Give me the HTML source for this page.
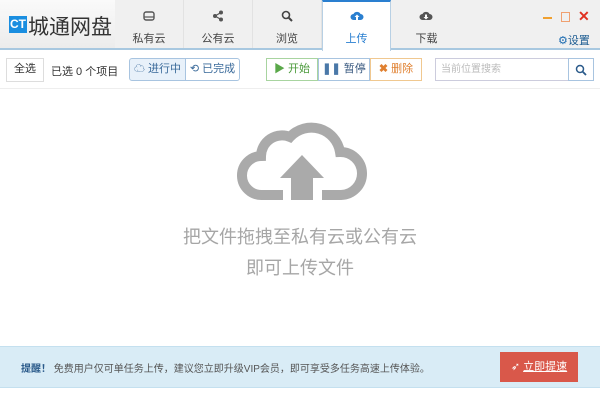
<!DOCTYPE html>
<html><head><meta charset="utf-8"><style>
*{margin:0;padding:0;box-sizing:border-box}
body{width:600px;height:402px;background:#fff;font-family:"Liberation Sans","Noto Sans CJK SC",sans-serif;position:relative;overflow:hidden;font-size:12px;color:#333}
.top{position:absolute;left:0;top:0;width:600px;height:50px;background:#f0f0f0;border-bottom:2px solid #a8c8e0}
.logo{position:absolute;left:0;top:0;width:115px;height:48px;background:linear-gradient(#fafafa,#ececec)}
.logo .ct{position:absolute;left:9px;top:16px;width:18px;height:17px;background:#1a8ee0;color:#fff;font-size:12px;font-weight:bold;line-height:17px;text-align:center}
.logo .nm{position:absolute;left:28px;top:11px;font-size:21px;color:#333;letter-spacing:0}
.tab{position:absolute;top:0;height:48px;width:69px;text-align:center;border-right:1px solid #e2e2e2;font-size:11px;color:#444}
.tab .t{position:absolute;top:30px;left:0;width:100%}
.tab svg{position:absolute;top:10px;left:28px}
.tab.act{background:#fff;border-top:2px solid #2a7fd0;height:51px;border-left:1px solid #b8d0e4;border-right:1px solid #b8d0e4;color:#2a7fd0}
.btn{position:absolute;top:58px;height:23px;border:1px solid #ddd;line-height:21px;font-size:11px;text-align:center}
</style></head><body>
<div class="top">
<div class="logo"><div class="ct">CT</div><div class="nm">城通网盘</div></div>
<div class="tab" style="left:115px"><svg width="12" height="12" viewBox="0 0 12 12"><rect x="1" y="2" width="10" height="8" rx="2" fill="none" stroke="#555" stroke-width="1.4"/><line x1="1" y1="7" x2="11" y2="7" stroke="#555" stroke-width="1.2"/></svg><div class="t">私有云</div></div>
<div class="tab" style="left:184px"><svg width="12" height="12" viewBox="0 0 12 12"><circle cx="3" cy="6" r="2" fill="#555"/><circle cx="9" cy="2.5" r="2" fill="#555"/><circle cx="9" cy="9.5" r="2" fill="#555"/><path d="M3 6L9 2.5M3 6L9 9.5" stroke="#555" stroke-width="1.2"/></svg><div class="t">公有云</div></div>
<div class="tab" style="left:253px"><svg width="12" height="12" viewBox="0 0 12 12"><circle cx="5" cy="5" r="3.5" fill="none" stroke="#444" stroke-width="1.6"/><path d="M7.5 7.5L11 11" stroke="#444" stroke-width="2"/></svg><div class="t">浏览</div></div>
<div class="tab act" style="left:322px"><svg width="14" height="12" viewBox="0 0 14 12" style="top:8px;left:27px"><path d="M3.5 10A3 3 0 0 1 3.5 4A4 4 0 0 1 10.5 4A3 3 0 0 1 10.5 10Z" fill="#2a7fd0"/><path d="M7 4.5L4.5 7H6V10H8V7H9.5Z" fill="#fff"/></svg><div class="t" style="top:28px">上传</div></div>
<div class="tab" style="left:392px;border-right:none"><svg width="14" height="12" viewBox="0 0 14 12" style="left:27px"><path d="M3.5 10A3 3 0 0 1 3.5 4A4 4 0 0 1 10.5 4A3 3 0 0 1 10.5 10Z" fill="#555"/><path d="M7 9.5L4.5 7H6V4.5H8V7H9.5Z" fill="#fff"/></svg><div class="t">下载</div></div>
<div style="position:absolute;left:543px;top:17px;width:9px;height:2px;background:#f0a030"></div>
<div style="position:absolute;left:561px;top:12px;width:9px;height:10px;border:1px solid #f0a070"></div>
<div style="position:absolute;left:578px;top:8px;color:#e03020;font-size:14px;font-weight:bold">✕</div>
<div style="position:absolute;left:558px;top:32px;font-size:11px;color:#1a5a90"><span style="color:#1a6ab0">⚙</span>设置</div>
</div>
<div class="btn" style="left:6px;width:38px;top:58px;height:24px">全选</div>
<div style="position:absolute;left:51px;top:63px;font-size:11px">已选 0 个项目</div>
<div class="btn" style="left:129px;width:57px;background:#e8f1fa;border-color:#a8c4e0;color:#3a6a9a;border-radius:3px 0 0 3px">☁ 进行中</div>
<div class="btn" style="left:185px;width:55px;border-color:#a8c4e0;color:#3a6a9a;border-radius:0 3px 3px 0">⟲ 已完成</div>
<div class="btn" style="left:266px;width:52px;border-color:#a8d4a0;color:#4a9a3a"><span style="color:#5aa84a">▶</span> 开始</div>
<div class="btn" style="left:318px;width:52px;border-color:#a8c4e0;color:#3a5a80"><b style="color:#4a78a8">❚❚</b> 暂停</div>
<div class="btn" style="left:370px;width:52px;border-color:#f0c890;color:#e08030"><b>✖</b> 删除</div>
<div class="btn" style="left:435px;width:134px;border-color:#ccd;text-align:left;padding-left:5px;color:#bbb;font-size:10px">当前位置搜索</div>
<div class="btn" style="left:568px;width:26px;border-color:#a8c4e0"><svg width="12" height="12" viewBox="0 0 12 12" style="margin-top:5px"><circle cx="5" cy="5" r="3.5" fill="none" stroke="#2a5a8a" stroke-width="1.5"/><path d="M7.5 7.5L11 11" stroke="#2a5a8a" stroke-width="1.8"/></svg></div>
<div style="position:absolute;left:0;top:88px;width:600px;height:1px;background:#eee"></div>
<svg width="600" height="402" style="position:absolute;left:0;top:0">
<path d="M283 195H262A19.5 19.5 0 0 1 261 156A21 21 0 0 1 290 137A29 29 0 0 1 340 152A21.5 21.5 0 0 1 341 195H322" fill="none" stroke="#aaa" stroke-width="10"/>
<path d="M302 155L280 178H291V200H313V178H324Z" fill="#aaa"/>
</svg>
<div style="position:absolute;left:0;top:226px;width:600px;text-align:center;font-size:18px;color:#a6a6a6;line-height:22px">把文件拖拽至私有云或公有云</div>
<div style="position:absolute;left:0;top:257px;width:600px;text-align:center;font-size:18px;color:#a6a6a6;line-height:22px">即可上传文件</div>
<div style="position:absolute;left:0;top:346px;width:600px;height:42px;background:#d9ecf6;border-top:1px solid #c4e0ef;border-bottom:1px solid #c4e0ef"></div>
<div style="position:absolute;left:21px;top:360px;font-size:10px;color:#555"><b style="color:#2a5a8a">提醒！</b> 免费用户仅可单任务上传，建议您立即升级VIP会员，即可享受多任务高速上传体验。</div>
<div style="position:absolute;left:500px;top:352px;width:78px;height:30px;background:#d9584a;color:#fff;font-size:11px;text-align:center;line-height:30px">➶ <u>立即提速</u></div>
</body></html>
